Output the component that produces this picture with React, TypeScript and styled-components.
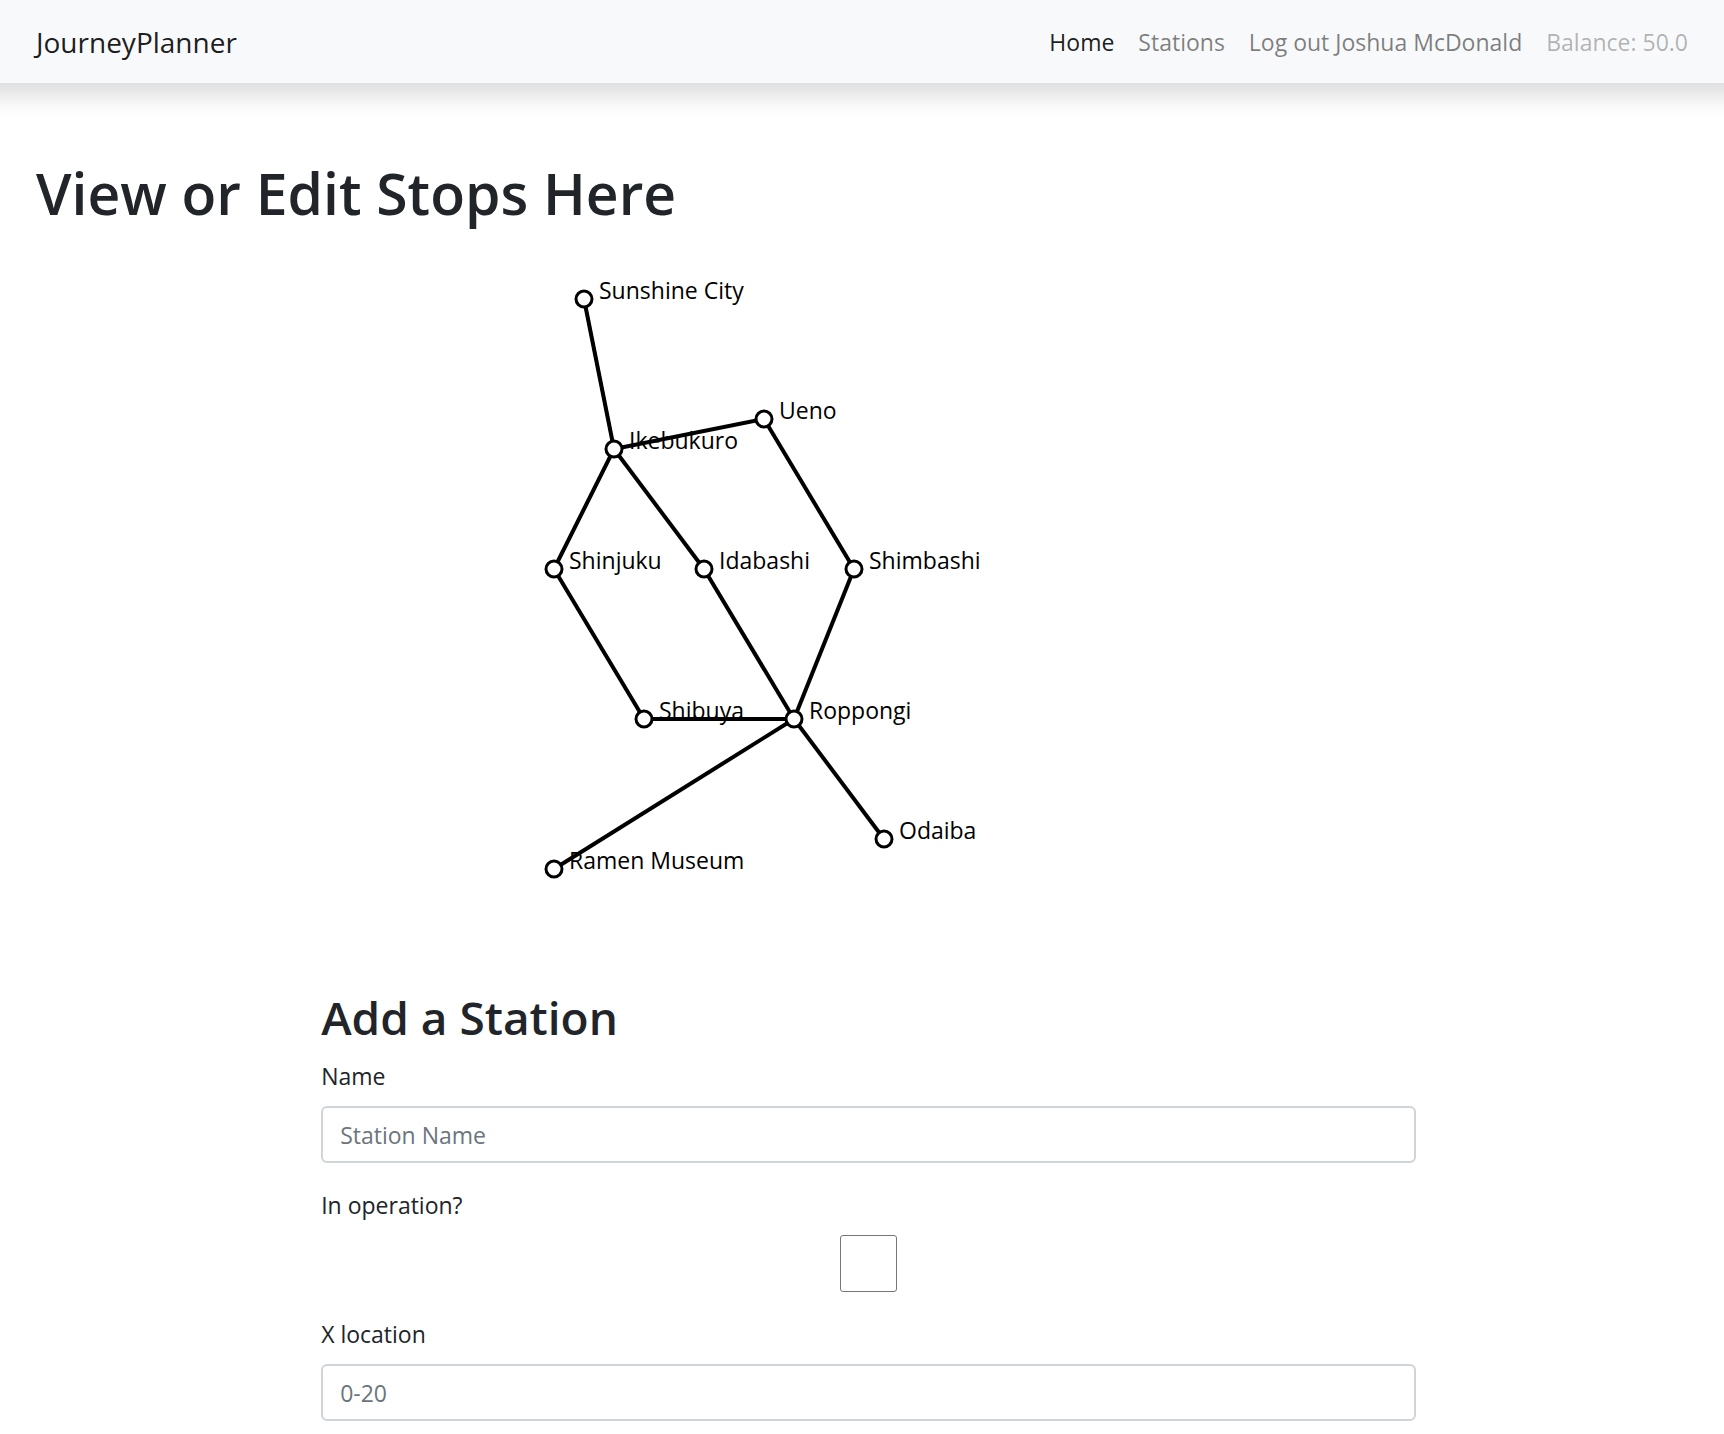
import React from 'react';
import styled, { createGlobalStyle, css } from 'styled-components';

const GlobalStyle = createGlobalStyle`
  *, *::before, *::after { box-sizing: border-box; }
  body {
    margin: 0;
    background: #fff;
    color: #212529;
    font-family: "Segoe UI", "Open Sans", "Noto Sans", sans-serif;
    font-size: 23px;
    font-weight: 400;
    line-height: 36px;
    overflow-x: hidden;
  }
`;

const Navbar = styled.nav`
  display: flex;
  align-items: center;
  justify-content: space-between;
  min-height: 83px;
  padding: 12px 36px;
  background: #f8f9fa;
  box-shadow: 0 -12px 24px 24px rgba(0, 0, 0, 0.15);
`;

const Brand = styled.a`
  color: rgba(0, 0, 0, 0.9);
  font-size: 28px;
  line-height: 44px;
  text-decoration: none;
`;

const NavList = styled.ul`
  display: flex;
  gap: 24px;
  margin: 0;
  padding: 0;
  list-style: none;
`;

const tones = {
  active: 'rgba(0, 0, 0, 0.9)',
  normal: 'rgba(0, 0, 0, 0.5)',
  disabled: 'rgba(0, 0, 0, 0.3)',
};

const NavLink = styled.a<{ $tone: keyof typeof tones }>`
  color: ${({ $tone }) => tones[$tone]};
  text-decoration: none;
  white-space: nowrap;
`;

const Main = styled.main`
  padding: 74px 0 72px 36px;
`;

const headingStyle = css`
  margin: 0 0 12px;
  font-weight: 600;
`;

const PageTitle = styled.h1`
  ${headingStyle}
  font-size: 57px;
  line-height: 72px;
`;

const FormTitle = styled.h2`
  ${headingStyle}
  font-size: 46px;
  line-height: 58px;
`;

const Row = styled.div`
  display: grid;
  grid-template-columns: repeat(12, minmax(0, 1fr));
  margin-left: -23px;
`;

const Column = styled.div<{ $start: number; $span: number }>`
  grid-column: ${({ $start, $span }) => `${$start} / span ${$span}`};
  padding: 0 23px;
`;

const MapCanvas = styled.svg`
  display: block;
  width: 100%;
  height: 747px;
  overflow: visible;
`;

const StationLabel = styled.text`
  fill: #000;
`;

const Track = styled.line`
  stroke: #000;
  stroke-width: 4px;
`;

const StationDot = styled.circle`
  fill: #fff;
  stroke: #000;
  stroke-width: 3px;
`;

const Field = styled.div`
  display: flex;
  flex-direction: column;
  gap: 12px;
  margin-bottom: 24px;
`;

const TextInput = styled.input`
  width: 100%;
  height: 57px;
  padding: 9px 17px;
  border: 2px solid #ced4da;
  border-radius: 6px;
  background: #fff;
  color: #495057;
  font: inherit;
  &::placeholder { color: #6c757d; opacity: 1; }
`;

const Checkbox = styled.input`
  appearance: none;
  align-self: center;
  width: 57px;
  height: 57px;
  margin: 0;
  border: 1px solid #767676;
  border-radius: 3px;
  background: #fff;
  &:checked { background: #0075ff; }
`;

const UNIT = 30;
const MAP_TOP = -2;

const stations: Record<string, [number, number]> = {
  'Sunshine City': [4, 2],
  Ueno: [10, 6],
  Ikebukuro: [5, 7],
  Shinjuku: [3, 11],
  Idabashi: [8, 11],
  Shimbashi: [13, 11],
  Shibuya: [6, 16],
  Roppongi: [11, 16],
  Odaiba: [14, 20],
  'Ramen Museum': [3, 21],
};

const tracks: [string, string][] = [
  ['Sunshine City', 'Ikebukuro'],
  ['Ikebukuro', 'Ueno'],
  ['Ikebukuro', 'Shinjuku'],
  ['Ikebukuro', 'Idabashi'],
  ['Ueno', 'Shimbashi'],
  ['Shinjuku', 'Shibuya'],
  ['Idabashi', 'Roppongi'],
  ['Shimbashi', 'Roppongi'],
  ['Shibuya', 'Roppongi'],
  ['Roppongi', 'Ramen Museum'],
  ['Roppongi', 'Odaiba'],
];

const toCanvas = (name: string) => {
  const [x, y] = stations[name];
  return { x: x * UNIT, y: y * UNIT + MAP_TOP };
};

function StationMap() {
  const names = Object.keys(stations);
  return (
    <MapCanvas role="img" aria-label="Station map">
      {names.map((name) => {
        const { x, y } = toCanvas(name);
        return <StationLabel key={name} x={x + 15} y={y}>{name}</StationLabel>;
      })}
      {tracks.map(([from, to]) => {
        const a = toCanvas(from);
        const b = toCanvas(to);
        return <Track key={`${from}-${to}`} x1={a.x} y1={a.y} x2={b.x} y2={b.y} />;
      })}
      {names.map((name) => {
        const { x, y } = toCanvas(name);
        return <StationDot key={name} cx={x} cy={y} r={8} />;
      })}
    </MapCanvas>
  );
}

export default function App() {
  return (
    <>
      <GlobalStyle />
      <Navbar>
        <Brand href="#">JourneyPlanner</Brand>
        <NavList>
          <li><NavLink href="#" $tone="active" aria-current="page">Home</NavLink></li>
          <li><NavLink href="#" $tone="normal">Stations</NavLink></li>
          <li><NavLink href="#" $tone="normal">Log out Joshua McDonald</NavLink></li>
          <li><NavLink $tone="disabled" aria-disabled="true">Balance: 50.0</NavLink></li>
        </NavList>
      </Navbar>
      <Main>
        <PageTitle>View or Edit Stops Here</PageTitle>
        <Row>
          <Column $start={4} $span={6}>
            <StationMap />
          </Column>
        </Row>
        <Row>
          <Column as="form" $start={3} $span={8}>
            <FormTitle>Add a Station</FormTitle>
            <Field>
              <label htmlFor="name">Name</label>
              <TextInput id="name" type="text" placeholder="Station Name" />
            </Field>
            <Field>
              <label htmlFor="operation">In operation?</label>
              <Checkbox id="operation" type="checkbox" />
            </Field>
            <Field>
              <label htmlFor="x-location">X location</label>
              <TextInput id="x-location" type="text" placeholder="0-20" />
            </Field>
          </Column>
        </Row>
      </Main>
    </>
  );
}
